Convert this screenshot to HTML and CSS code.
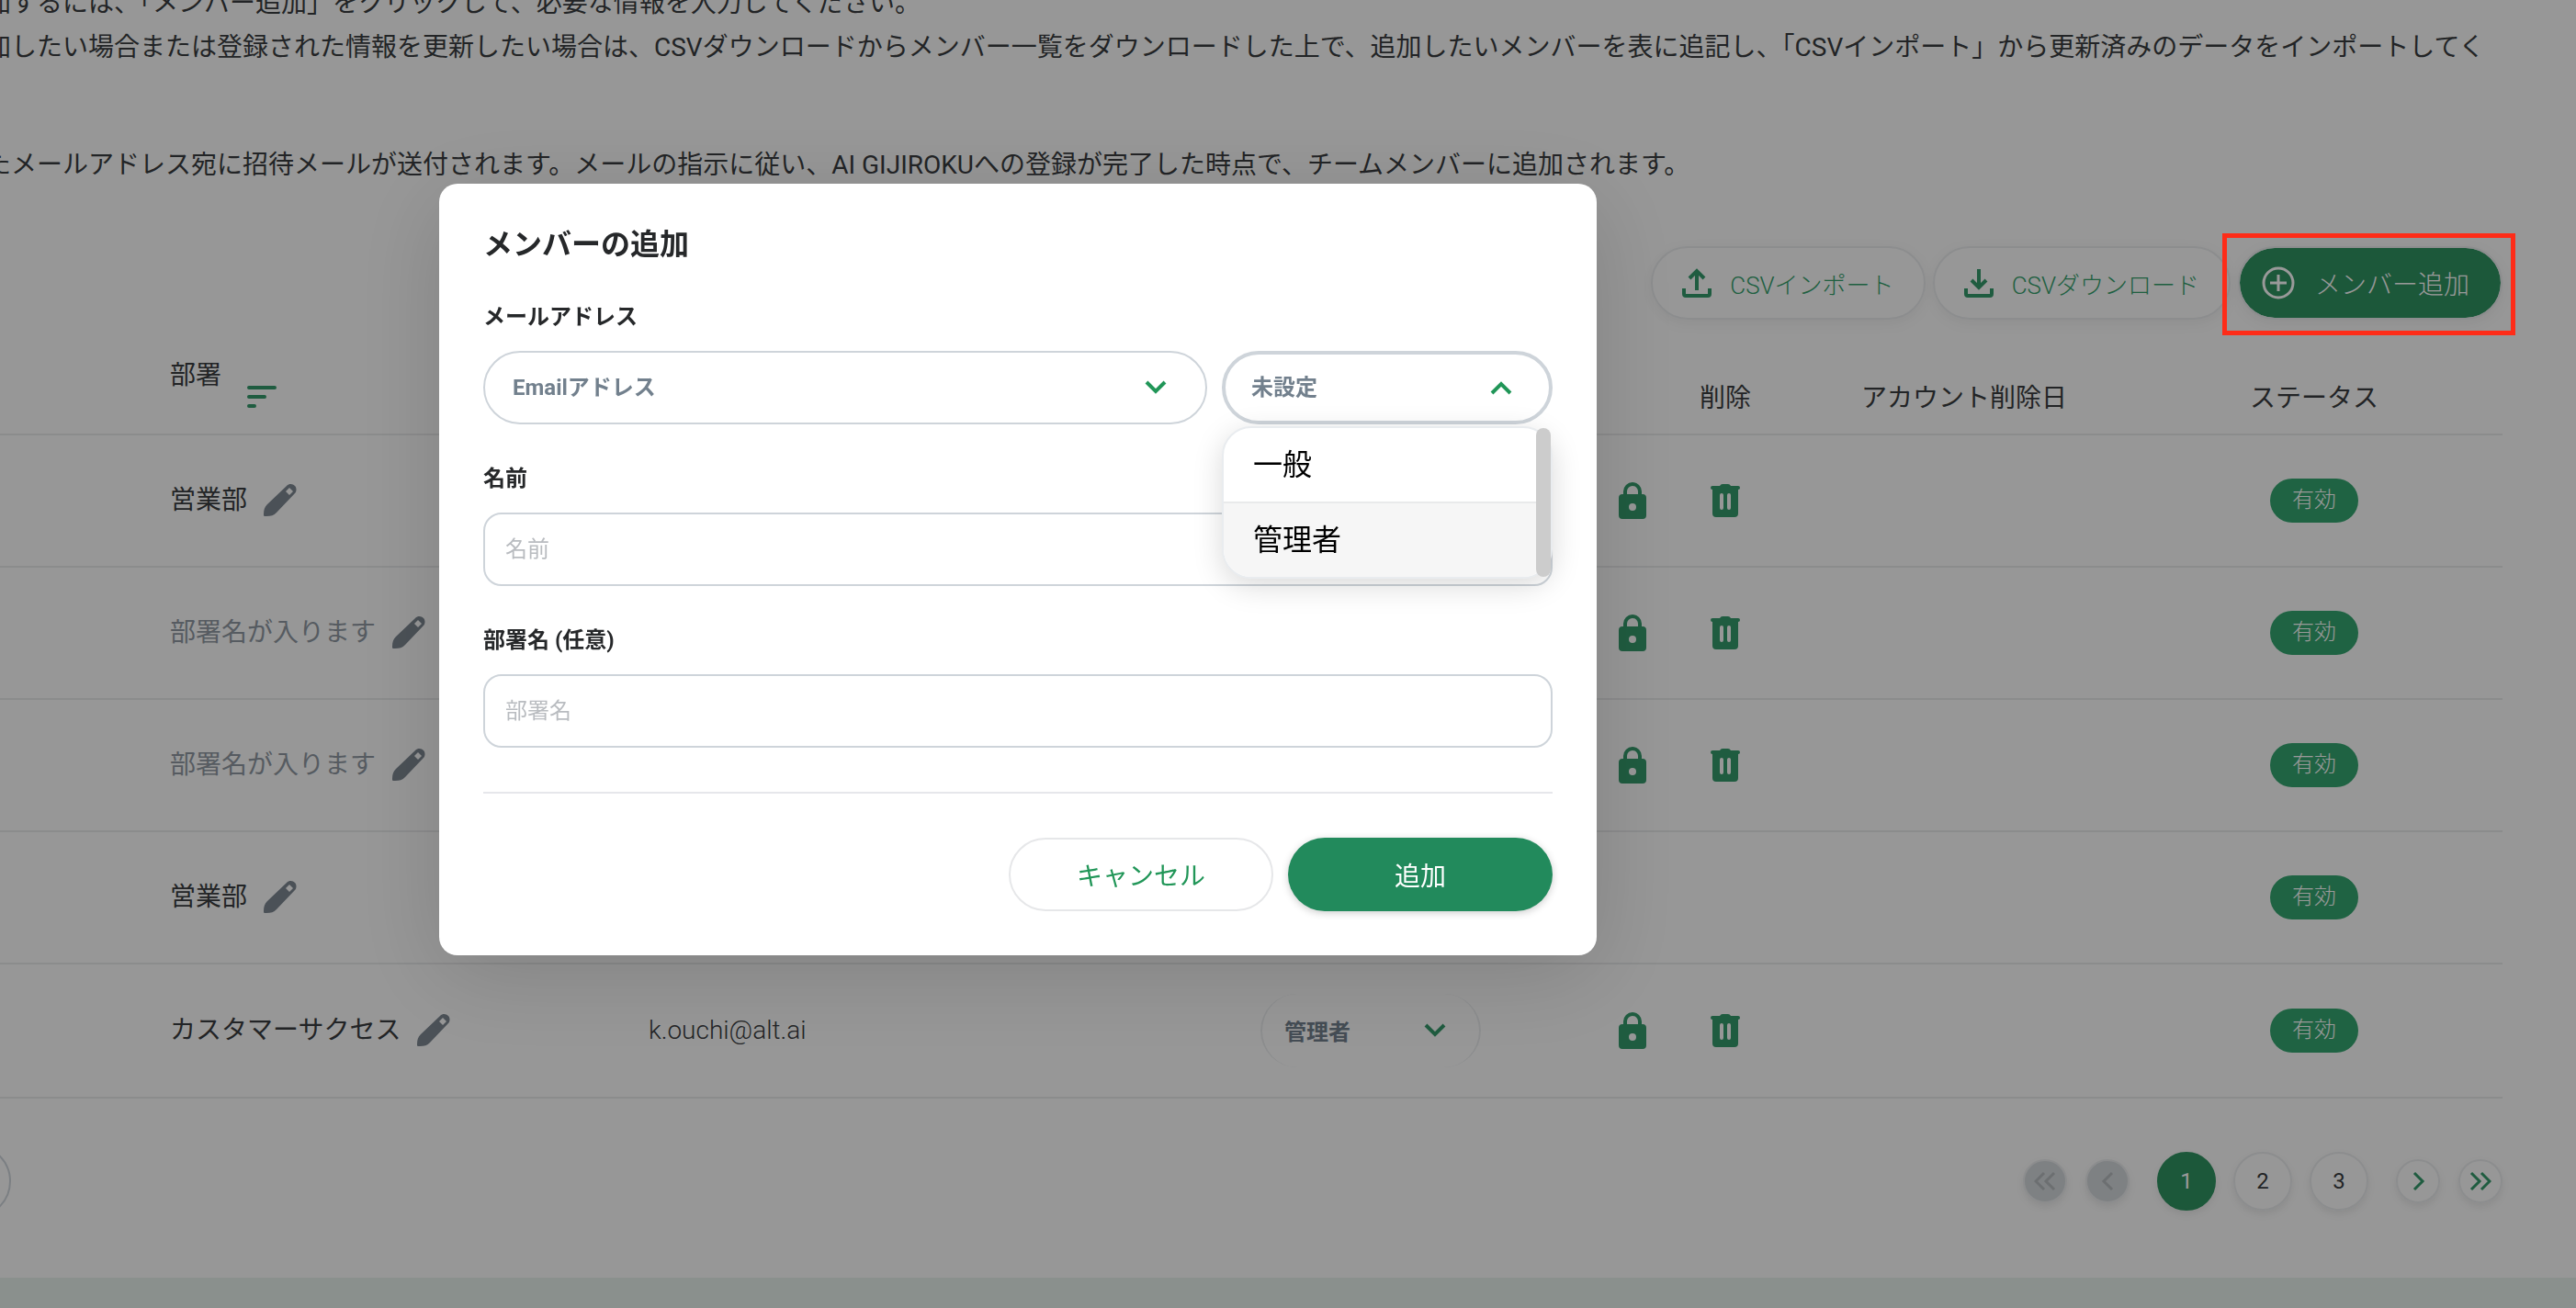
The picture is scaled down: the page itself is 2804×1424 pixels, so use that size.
FILE: index.html
```html
<!DOCTYPE html>
<html lang="ja">
<head>
	<meta charset="utf-8">
	<title>メンバーの追加</title>
	<link rel="stylesheet" href="styles.css">
</head>
<body>

<!-- Icon set -->
<svg class="sprite" aria-hidden="true">
	<symbol id="icon-upload" viewBox="0 0 32 32">
		<path d="M16 24V4M8 11l8-8 8 8M2 22v6a2 2 0 0 0 2 2h24a2 2 0 0 0 2-2v-6" fill="none" stroke="currentColor" stroke-width="4"/>
	</symbol>
	<symbol id="icon-download" viewBox="0 0 32 32">
		<path d="M16 1v19M8 13l8 8 8-8M2 22v6a2 2 0 0 0 2 2h24a2 2 0 0 0 2-2v-6" fill="none" stroke="currentColor" stroke-width="4"/>
	</symbol>
	<symbol id="icon-plus" viewBox="0 0 36 36">
		<path d="M18 9v18M9 18h18" fill="none" stroke="currentColor" stroke-width="3"/>
		<circle cx="18" cy="18" r="16" fill="none" stroke="currentColor" stroke-width="3"/>
	</symbol>
	<symbol id="icon-sort" viewBox="0 0 32 24">
		<path d="M2 2h28M2 12h17M2 22h6" fill="none" stroke="currentColor" stroke-width="4" stroke-linecap="round"/>
	</symbol>
	<symbol id="icon-pencil" viewBox="0 0 36 36">
		<path fill-rule="evenodd" fill="currentColor" d="M1 35c-1 0-1-1-1-2 0-5 1-8 4-11L25 2c3-3 7-2 9 0s2 6 0 8L14 31c-3 3-6 4-11 4zM24 8l4-4 4 4-4 4z"/>
	</symbol>
	<symbol id="icon-lock" viewBox="0 0 30 40">
		<path fill-rule="evenodd" fill="currentColor" d="M5 13v-3a10 10 0 0 1 20 0v3h1a4 4 0 0 1 4 4v19a4 4 0 0 1-4 4H4a4 4 0 0 1-4-4V17a4 4 0 0 1 4-4zM9 13h12v-3a6 6 0 0 0-12 0zM15 23a4 4 0 1 0 0 8 4 4 0 0 0 0-8z"/>
	</symbol>
	<symbol id="icon-trash" viewBox="0 0 32 36">
		<path fill-rule="evenodd" fill="currentColor" d="M2 2h8q1-2 3-2h6q2 0 3 2h8q2 0 2 2t-2 2v26a4 4 0 0 1-4 4H6a4 4 0 0 1-4-4V6Q0 6 0 4t2-2zM12 10q-2 0-2 2v14q0 2 2 2t2-2V12q0-2-2-2zM20 10q-2 0-2 2v14q0 2 2 2t2-2V12q0-2-2-2z"/>
	</symbol>
	<symbol id="icon-down" viewBox="0 0 24 16">
		<path d="M2 2l10 10L22 2" fill="none" stroke="currentColor" stroke-width="4"/>
	</symbol>
	<symbol id="icon-up" viewBox="0 0 24 16">
		<path d="M2 14L12 4l10 10" fill="none" stroke="currentColor" stroke-width="4"/>
	</symbol>
	<symbol id="icon-next" viewBox="0 0 24 20">
		<path d="M8 1l9 9-9 9" fill="none" stroke="currentColor" stroke-width="3"/>
	</symbol>
	<symbol id="icon-last" viewBox="0 0 24 20">
		<path d="M2 1l9 9-9 9M13 1l9 9-9 9" fill="none" stroke="currentColor" stroke-width="3"/>
	</symbol>
	<symbol id="icon-prev" viewBox="0 0 24 20">
		<path d="M17 1l-9 9 9 9" fill="none" stroke="currentColor" stroke-width="3"/>
	</symbol>
	<symbol id="icon-first" viewBox="0 0 24 20">
		<path d="M11 1l-9 9 9 9M22 1l-9 9 9 9" fill="none" stroke="currentColor" stroke-width="3"/>
	</symbol>
</svg>

<main class="members">
	<div class="intro">
		<p>加するには、「メンバー追加」をクリックして、必要な情報を入力してください。</p>
		<p>加したい場合または登録された情報を更新したい場合は、CSVダウンロードからメンバー一覧をダウンロードした上で、追加したいメンバーを表に追記し、「CSVインポート」から更新済みのデータをインポートしてく</p>
		<p class="note">たメールアドレス宛に招待メールが送付されます。メールの指示に従い、AI GIJIROKUへの登録が完了した時点で、チームメンバーに追加されます。</p>
	</div>

	<!-- Action buttons -->
	<div class="toolbar">
		<button type="button" class="tool"><svg class="icon-tool"><use href="#icon-upload"/></svg>CSVインポート</button>
		<button type="button" class="tool"><svg class="icon-tool"><use href="#icon-download"/></svg>CSVダウンロード</button>
		<div class="marked">
			<button type="button" class="tool tool-add"><svg class="icon-add"><use href="#icon-plus"/></svg>メンバー追加</button>
		</div>
	</div>

	<!-- Member list -->
	<table class="list">
		<colgroup>
			<col>
			<col class="col-mail">
			<col class="col-role">
			<col class="col-lock">
			<col class="col-delete">
			<col class="col-date">
			<col class="col-status">
		</colgroup>
		<thead>
			<tr>
				<th class="dept"><div class="sort">部署<svg class="icon-sort"><use href="#icon-sort"/></svg></div></th>
				<th></th>
				<th></th>
				<th></th>
				<th>削除</th>
				<th>アカウント削除日</th>
				<th>ステータス</th>
			</tr>
		</thead>
		<tbody>
			<tr>
				<td class="dept"><div class="name">営業部<button type="button" class="edit" aria-label="編集"><svg><use href="#icon-pencil"/></svg></button></div></td>
				<td></td>
				<td></td>
				<td class="lock"><button type="button" class="icon-lock" aria-label="ロック"><svg><use href="#icon-lock"/></svg></button></td>
				<td><button type="button" class="icon-trash" aria-label="削除"><svg><use href="#icon-trash"/></svg></button></td>
				<td></td>
				<td><span class="chip">有効</span></td>
			</tr>
			<tr>
				<td class="dept"><div class="name empty">部署名が入ります<button type="button" class="edit" aria-label="編集"><svg><use href="#icon-pencil"/></svg></button></div></td>
				<td></td>
				<td></td>
				<td class="lock"><button type="button" class="icon-lock" aria-label="ロック"><svg><use href="#icon-lock"/></svg></button></td>
				<td><button type="button" class="icon-trash" aria-label="削除"><svg><use href="#icon-trash"/></svg></button></td>
				<td></td>
				<td><span class="chip">有効</span></td>
			</tr>
			<tr>
				<td class="dept"><div class="name empty">部署名が入ります<button type="button" class="edit" aria-label="編集"><svg><use href="#icon-pencil"/></svg></button></div></td>
				<td></td>
				<td></td>
				<td class="lock"><button type="button" class="icon-lock" aria-label="ロック"><svg><use href="#icon-lock"/></svg></button></td>
				<td><button type="button" class="icon-trash" aria-label="削除"><svg><use href="#icon-trash"/></svg></button></td>
				<td></td>
				<td><span class="chip">有効</span></td>
			</tr>
			<tr>
				<td class="dept"><div class="name">営業部<button type="button" class="edit" aria-label="編集"><svg><use href="#icon-pencil"/></svg></button></div></td>
				<td></td>
				<td></td>
				<td></td>
				<td></td>
				<td></td>
				<td><span class="chip">有効</span></td>
			</tr>
			<tr>
				<td class="dept"><div class="name">カスタマーサクセス<button type="button" class="edit" aria-label="編集"><svg><use href="#icon-pencil"/></svg></button></div></td>
				<td class="mail">k.ouchi@alt.ai</td>
				<td>
					<div class="select-box row-role">
						<select aria-label="権限">
							<option>管理者</option>
						</select>
						<svg class="arrow"><use href="#icon-down"/></svg>
					</div>
				</td>
				<td class="lock"><button type="button" class="icon-lock" aria-label="ロック"><svg><use href="#icon-lock"/></svg></button></td>
				<td><button type="button" class="icon-trash" aria-label="削除"><svg><use href="#icon-trash"/></svg></button></td>
				<td></td>
				<td><span class="chip">有効</span></td>
			</tr>
		</tbody>
	</table>

	<!-- Pager -->
	<div class="footer">
		<button type="button" class="per-page" aria-label="表示件数"></button>
		<nav class="pager">
			<button type="button" class="step" disabled aria-label="最初"><svg><use href="#icon-first"/></svg></button>
			<button type="button" class="step" disabled aria-label="前へ"><svg><use href="#icon-prev"/></svg></button>
			<div class="pages">
				<button type="button" class="page current">1</button>
				<button type="button" class="page">2</button>
				<button type="button" class="page">3</button>
			</div>
			<button type="button" class="step" aria-label="次へ"><svg><use href="#icon-next"/></svg></button>
			<button type="button" class="step" aria-label="最後"><svg><use href="#icon-last"/></svg></button>
		</nav>
	</div>
</main>

<!-- Add member dialog -->
<div class="overlay">
	<form class="modal" role="dialog" aria-labelledby="modalTitle">
		<h2 id="modalTitle">メンバーの追加</h2>

		<div class="field">
			<label for="email">メールアドレス</label>
			<div class="mail-row">
				<div class="select-box">
					<select id="email">
						<option>Emailアドレス</option>
					</select>
					<svg class="arrow"><use href="#icon-down"/></svg>
				</div>
				<div class="select-box open">
					<select aria-label="権限">
						<option>未設定</option>
					</select>
					<svg class="arrow"><use href="#icon-up"/></svg>
					<div class="menu">
						<ul role="listbox">
							<li role="option">一般</li>
							<li role="option" class="hover">管理者</li>
						</ul>
						<div class="thumb"></div>
					</div>
				</div>
			</div>
		</div>

		<div class="field">
			<label for="name">名前</label>
			<input type="text" id="name" placeholder="名前">
		</div>

		<div class="field">
			<label for="dept">部署名 (任意)</label>
			<input type="text" id="dept" placeholder="部署名">
		</div>

		<div class="actions">
			<button type="button" class="cancel">キャンセル</button>
			<button type="submit" class="submit">追加</button>
		</div>
	</form>
</div>

</body>
</html>
```
FILE: styles.css
```css
* {
	box-sizing: border-box;
}

body {
	margin: 0;
	overflow: hidden;
	background: #e6f0ec;
	color: #3a3c40;
	font-family: Roboto, "Noto Sans CJK JP", sans-serif;
	font-size: 28px;
	line-height: 34px;
}

button, input, select {
	font-family: inherit;
	color: inherit;
}

button {
	padding: 0;
	border: 0;
	background: none;
}

button svg {
	display: block;
	width: 100%;
	height: 100%;
}

.sprite {
	position: absolute;
	width: 0;
	height: 0;
}

.members {
	margin-top: -20px;
	padding: 0 80px 65px 0;
	background: #fcfcfc;
}

/* intro text */
.intro {
	margin-left: -16px;
	line-height: 48px;
	white-space: nowrap;
}

.intro p {
	margin: 0;
}

.intro .note {
	margin-top: 80px;
}

/* toolbar */
.toolbar {
	display: flex;
	justify-content: flex-end;
	gap: 8px;
	margin-top: 64px;
}

.tool {
	display: flex;
	align-items: center;
	gap: 20px;
	height: 80px;
	padding: 0 32px;
	border: 2px solid #e9ebed;
	border-radius: 40px;
	box-shadow: 0 4px 16px rgba(0,0,0,.06);
	color: #35a06c;
	font-size: 26px;
	font-weight: 300;
}

.tool .icon-tool {
	width: 32px;
	height: 32px;
	color: #35996b;
}

.tool-add {
	padding: 0 34px 0 24px;
	gap: 22px;
	background: #309362;
	background-clip: padding-box;
	color: #fff;
	font-size: 28px;
}

.tool .icon-add {
	width: 36px;
	height: 36px;
}

.marked {
	position: relative;
}

.marked::after {
	content: "";
	position: absolute;
	z-index: 20;
	top: -14px;
	right: -14px;
	bottom: -17px;
	left: -17px;
	border: 5px solid #fe2c18;
}

/* member list */
.list {
	width: 100%;
	margin-top: 44px;
	table-layout: fixed;
	border-collapse: separate;
	border-spacing: 0;
	text-align: center;
}

.col-mail { width: 666px; }
.col-role { width: 240px; }
.col-lock { width: 182px; }
.col-delete { width: 168px; }
.col-date { width: 352px; }
.col-status { width: 410px; }

.list th, .list td {
	padding: 0;
	border-bottom: 2px solid #e8e9ea;
	font-weight: 400;
}

.list th {
	height: 82px;
	padding-top: 4px;
}

.list td {
	height: 144px;
}

.list tr:last-child td {
	height: 146px;
}

.list .dept {
	padding-left: 185px;
	text-align: left;
}

.list th.dept {
	padding-top: 0;
	vertical-align: top;
}

.sort {
	display: flex;
	gap: 28px;
}

.icon-sort {
	width: 32px;
	height: 24px;
	margin-top: 28px;
	color: #35996b;
}

.name {
	display: flex;
	align-items: center;
	gap: 18px;
}

.empty {
	color: #8f98a2;
}

.edit {
	width: 36px;
	height: 36px;
	color: #7d8791;
}

.list .mail {
	text-align: left;
	font-weight: 300;
}

.list .lock {
	padding-right: 2px;
	text-align: right;
}

.icon-lock, .icon-trash {
	display: inline-block;
	vertical-align: middle;
	width: 30px;
	height: 40px;
	color: #35996b;
}

.icon-trash {
	width: 32px;
	height: 36px;
}

.chip {
	display: inline-block;
	width: 96px;
	height: 48px;
	border-radius: 24px;
	background: #34a670;
	color: #fff;
	font-size: 24px;
	font-weight: 300;
	line-height: 46px;
}

/* pager */
.footer {
	display: flex;
	justify-content: space-between;
	align-items: center;
	margin-top: 50px;
}

.per-page {
	width: 160px;
	height: 80px;
	margin-left: -148px;
	border: 2px solid #ced4da;
	border-radius: 40px;
}

.pager {
	display: flex;
	align-items: center;
	gap: 20px;
}

.pages {
	display: flex;
	gap: 19px;
	margin: 0 10px;
}

.page, .step {
	width: 64px;
	height: 64px;
	border: 2px solid #e9ebed;
	border-radius: 50%;
	box-shadow: 0 4px 8px rgba(0,0,0,.08);
	font-size: 24px;
}

.step {
	width: 48px;
	height: 48px;
	padding: 10px;
	color: #35996b;
}

.step:disabled {
	background: #d3d7da;
	color: #b4b9bd;
}

.current {
	border-color: #309362;
	background: #309362;
	color: #fff;
}

/* dialog */
.overlay {
	position: fixed;
	z-index: 10;
	top: 0;
	right: 0;
	bottom: 0;
	left: 0;
	display: flex;
	justify-content: center;
	align-items: flex-start;
	padding: 200px 588px 0 0;
	background: rgba(0,0,0,.4);
}

.modal {
	width: 1260px;
	padding: 40px 48px 48px;
	border-radius: 20px;
	background: #fff;
	box-shadow: 0 20px 100px rgba(0,0,0,.15);
	color: #26282a;
}

.modal h2 {
	margin: 0 0 36px;
	font-size: 32px;
	font-weight: 700;
	line-height: 52px;
}

.field + .field {
	margin-top: 42px;
}

.field label {
	display: block;
	margin-bottom: 20px;
	font-size: 24px;
	font-weight: 700;
}

.field input {
	display: block;
	width: 100%;
	height: 80px;
	padding: 0 22px;
	border: 2px solid #ced4da;
	border-radius: 20px;
	background: none;
	font-size: 24px;
}

.field input::placeholder {
	color: #b9bcc0;
}

.mail-row {
	display: flex;
	gap: 16px;
}

.select-box {
	position: relative;
	flex: 1;
}

.select-box select {
	display: block;
	appearance: none;
	width: 100%;
	height: 80px;
	padding: 0 30px;
	border: 2px solid #ced4da;
	border-radius: 40px;
	background: none;
	color: #72808d;
	font-size: 24px;
	font-weight: 700;
}

.arrow {
	position: absolute;
	top: 32px;
	right: 44px;
	width: 24px;
	height: 16px;
	color: #219658;
	pointer-events: none;
}

.open {
	flex: none;
	width: 360px;
}

.open select {
	padding: 0 28px;
	border-width: 4px;
}

.row-role select {
	padding: 4px 24px 0;
	border-color: #e9ebed;
	border-width: 0 2px;
}

.row-role .arrow {
	right: 38px;
	color: #35996b;
}

.menu {
	position: absolute;
	z-index: 1;
	top: 82px;
	left: 0;
	width: 100%;
	border: 2px solid #e9ecef;
	border-radius: 32px;
	background: #fff;
	box-shadow: 0 8px 32px rgba(0,0,0,.15);
	color: #000;
	font-size: 32px;
}

.menu ul {
	margin: 0;
	padding: 0;
	list-style: none;
	border-radius: 30px;
	overflow: hidden;
}

.menu li {
	padding: 0 32px;
	line-height: 80px;
}

.menu li + li {
	border-top: 2px solid #e9eaeb;
}

.menu .hover {
	background: #f6f6f6;
}

.thumb {
	position: absolute;
	top: 0;
	right: 0;
	bottom: 0;
	width: 16px;
	border-radius: 8px;
	background: #ccc;
}

.actions {
	display: flex;
	justify-content: flex-end;
	gap: 16px;
	margin-top: 48px;
	padding-top: 48px;
	border-top: 2px solid #e6e7eb;
}

.actions button {
	width: 288px;
	height: 80px;
	border-radius: 40px;
	font-size: 28px;
}

.actions .cancel {
	border: 2px solid #e6e7e9;
	color: #219658;
}

.actions .submit {
	background: #228a5c;
	box-shadow: 0 2px 8px rgba(0,0,0,.2);
	color: #fff;
}
```
